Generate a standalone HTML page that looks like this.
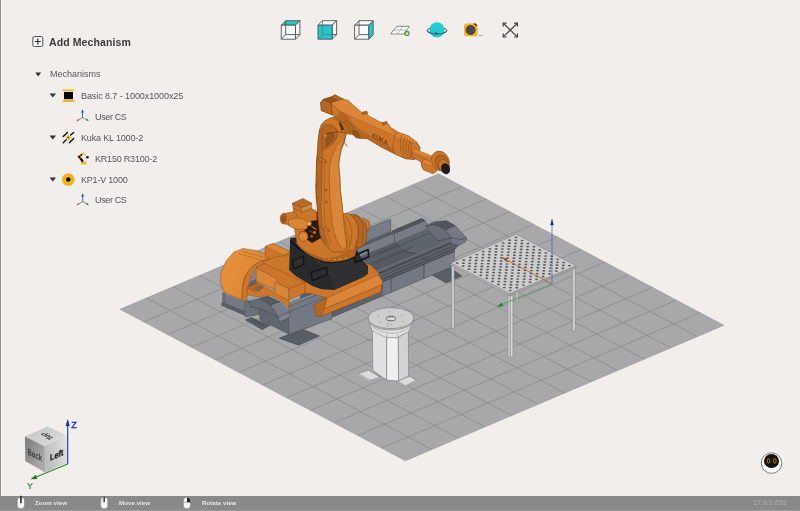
<!DOCTYPE html>
<html><head><meta charset="utf-8"><title>Mechanisms</title>
<style>
html,body{margin:0;padding:0}
body{width:800px;height:511px;overflow:hidden;background:#f1eeec;font-family:"Liberation Sans",sans-serif;position:relative;color:#4a4a4a}
#edge{position:absolute;left:0;top:0;width:1.2px;height:496px;background:#8c8c8c;border-right:1px solid #f8f7f7}
#scene{position:absolute;left:0;top:0;will-change:transform}
#bar{position:absolute;left:0;top:496px;width:800px;height:14px;background:#898989;border-bottom:1px solid #9c9c9c}
.t,#add,.bt{will-change:transform}
.t{position:absolute;white-space:nowrap;line-height:12px;font-size:9px;color:#585858}
#add{position:absolute;left:49.2px;top:35.6px;font-size:10.5px;font-weight:bold;letter-spacing:0.1px;color:#3c3c3c;line-height:13px;white-space:nowrap}
.bt{position:absolute;top:498.3px;font-size:6.2px;font-weight:bold;line-height:10px;color:#e6e6e6;white-space:nowrap}
</style></head><body>
<svg id="scene" width="800" height="511" viewBox="0 0 800 511">
<polygon points="120.0,309.3 405.4,460.8 723.9,325.3 438.6,173.8" fill="#a8a8aa"/>
<path d="M143.8 321.9L462.4 186.4M146.6 298.0L431.9 449.5M167.6 334.6L486.2 199.1M173.1 286.7L458.5 438.2M191.3 347.2L509.9 211.7M199.7 275.4L485.0 426.9M215.1 359.8L533.7 224.3M226.2 264.1L511.6 415.6M238.9 372.4L557.5 236.9M252.8 252.8L538.1 404.3M262.7 385.1L581.2 249.6M279.3 241.6L564.6 393.1M286.5 397.7L605.0 262.2M305.9 230.3L591.2 381.8M310.3 410.3L628.8 274.8M332.4 219.0L617.7 370.5M334.0 422.9L652.6 287.4M359.0 207.7L644.3 359.2M357.8 435.6L676.4 300.1M385.5 196.4L670.8 347.9M381.6 448.2L700.1 312.7M412.1 185.1L697.4 336.6" stroke="#8b8b8d" stroke-width="0.8" fill="none"/>
<defs><radialGradient id="fl" gradientUnits="userSpaceOnUse" cx="395" cy="238" r="330" gradientTransform="translate(395 238) scale(1 0.62) translate(-395 -238)"><stop offset="0" stop-color="#fff" stop-opacity="0.30"/><stop offset="0.35" stop-color="#fff" stop-opacity="0.17"/><stop offset="0.8" stop-color="#fff" stop-opacity="0.03"/><stop offset="1" stop-color="#fff" stop-opacity="0"/></radialGradient></defs>
<polygon points="120.0,309.3 405.4,460.8 723.9,325.3 438.6,173.8" fill="none" stroke="#9b9b9d" stroke-width="0.6"/>
<g id="track">
<polygon points="245.5,320.0 262.3,329.7 270.0,325.2 251.1,317.5" fill="#595e66" stroke="#303338" stroke-width="0.4" stroke-linejoin="round"/>
<polygon points="250.0,320.3 262.0,326.8 265.5,325.0 253.5,318.6" fill="#4f545b"/>
<polygon points="279.0,338.2 298.5,345.2 319.5,336.0 302.0,329.0" fill="#595e66" stroke="#303338" stroke-width="0.4" stroke-linejoin="round"/>
<polygon points="431.0,274.5 446.0,283.0 462.0,276.0 450.0,268.0" fill="#595e66" stroke="#303338" stroke-width="0.4" stroke-linejoin="round"/>
<polygon points="348.0,236.8 390.0,219.0 390.7,219.4 390.7,231.4 348.0,249.4" fill="#777c86" stroke="#303338" stroke-width="0.4" stroke-linejoin="round"/>
<polygon points="391.7,230.9 395.3,233.8 395.3,243.0 391.7,240.5" fill="#5b6068"/>
<polygon points="391.7,230.9 421.7,218.3 425.8,220.9 395.3,233.8" fill="#4f545b" stroke="#303338" stroke-width="0.3" stroke-linejoin="round"/>
<polygon points="395.3,233.8 425.8,220.9 428.0,224.0 428.0,230.5 395.3,243.0" fill="#777c86"/>
<polygon points="348.0,249.4 390.7,231.4 394.0,234.0 348.0,253.4" fill="#575c64"/>
<polygon points="348.0,253.4 394.0,234.0 394.0,242.6 348.0,262.0" fill="#777c86"/>
<polygon points="300.0,282.5 348.0,262.0 394.0,242.6 425.8,229.4 430.0,232.6 449.4,235.8 467.0,238.5 465.8,241.6 458.8,245.6 455.0,249.0 455.0,252.0 300.0,316.6" fill="#5b6068"/>
<polygon points="300.0,316.6 455.0,251.2 455.0,265.4 300.0,330.8" fill="#737882"/>
<polygon points="424.0,264.3 455.0,251.2 455.0,265.4 424.0,278.5" fill="#797e88"/>
<polygon points="300.0,316.6 383.0,281.6 383.0,295.8 300.0,330.8" fill="#5c616a"/>
<polyline points="424.0,264.3 424.0,278.5" fill="none" stroke="#303338" stroke-width="0.6"/>
<polyline points="300.0,330.8 455.0,265.4" fill="none" stroke="#4a4e55" stroke-width="0.5"/>
<polyline points="391.0,278.2 391.0,292.4" fill="none" stroke="#303338" stroke-width="0.5"/>
<polyline points="330.0,303.9 455.0,251.2" fill="none" stroke="#303338" stroke-width="0.7"/>
<polyline points="330.0,301.2 456.5,247.9" fill="none" stroke="#303338" stroke-width="0.6"/>
<polygon points="348.0,262.0 394.0,242.6 395.3,242.6 398.2,245.8 404.0,250.3 408.8,252.6 417.0,253.2 340.0,285.7" fill="#555a62"/>
<polygon points="395.3,242.6 425.8,229.6 449.4,235.8 453.0,238.0 453.0,238.0 417.0,253.2 408.8,252.6 404.0,250.3 398.2,245.8" fill="#5e646c"/>
<polyline points="395.3,242.6 398.2,245.8 404.0,250.3 408.8,252.6 417.0,253.2" fill="none" stroke="#303338" stroke-width="0.5"/>
<polyline points="340.0,269.7 399.0,244.8" fill="none" stroke="#303338" stroke-width="0.4"/>
<polyline points="340.0,273.7 404.0,246.7" fill="none" stroke="#666b74" stroke-width="0.9"/>
<polyline points="340.0,277.7 413.0,246.9" fill="none" stroke="#303338" stroke-width="0.4"/>
<polyline points="399.0,245.8 449.0,224.7" fill="none" stroke="#303338" stroke-width="0.35"/>
<polyline points="340.0,286.8 454.0,238.7" fill="none" stroke="#6a6f78" stroke-width="1.3"/>
<polyline points="340.0,289.9 455.0,241.4" fill="none" stroke="#303338" stroke-width="0.8"/>
<polyline points="340.0,293.8 456.0,244.9" fill="none" stroke="#303338" stroke-width="0.4"/>
<polyline points="421.5,256.8 427.6,260.4" fill="none" stroke="#303338" stroke-width="0.5"/>
<polygon points="425.8,225.9 434.5,221.8 440.8,221.2 435.5,225.0" fill="#585d65" stroke="#303338" stroke-width="0.3" stroke-linejoin="round"/>
<polygon points="435.5,225.0 440.8,221.2 446.4,220.6 455.2,225.6 445.8,230.0" fill="#50555d" stroke="#303338" stroke-width="0.35" stroke-linejoin="round"/>
<polygon points="425.8,225.9 435.5,225.0 445.8,230.0 451.4,237.8 438.0,240.8 430.0,232.6" fill="#676c76" stroke="#303338" stroke-width="0.35" stroke-linejoin="round"/>
<polygon points="445.8,230.0 455.2,225.6 466.5,237.8 460.2,239.6 451.4,237.8" fill="#747985" stroke="#303338" stroke-width="0.35" stroke-linejoin="round"/>
<polygon points="451.4,237.8 460.2,239.6 466.5,237.8 465.8,241.6 458.8,245.6 450.0,242.5" fill="#727783" stroke="#303338" stroke-width="0.3" stroke-linejoin="round"/>
<polygon points="224.7,293.6 244.5,301.5 244.5,313.0 224.7,304.0" fill="#747984"/>
<polygon points="221.6,303.0 224.7,303.4 244.5,311.6 244.5,315.2 221.6,305.4" fill="#5b6068" stroke="#303338" stroke-width="0.3" stroke-linejoin="round"/>
<polygon points="222.6,292.6 224.7,293.6 224.7,303.4 222.6,302.8" fill="#686d77" stroke="#303338" stroke-width="0.3" stroke-linejoin="round"/>
<polygon points="244.5,299.5 249.1,301.2 250.6,306.8 259.8,308.4 259.8,314.5 245.5,317.0 244.5,315.2" fill="#6b707a" stroke="#303338" stroke-width="0.35" stroke-linejoin="round"/>
<polygon points="259.8,308.4 278.6,317.0 279.1,322.0 289.8,317.5 289.8,334.5 259.8,320.0" fill="#60656f" stroke="#303338" stroke-width="0.3" stroke-linejoin="round"/>
<polygon points="288.7,306.0 332.0,288.7 332.0,318.8 288.7,334.5" fill="#737882" stroke="#303338" stroke-width="0.3" stroke-linejoin="round"/>
<polygon points="288.7,303.0 332.0,285.7 332.0,288.7 288.7,306.0" fill="#7f848e" stroke="#303338" stroke-width="0.3" stroke-linejoin="round"/>
<polyline points="288.7,312.0 332.0,294.7" fill="none" stroke="#303338" stroke-width="0.3"/>
<polygon points="249.1,301.2 259.8,298.2 270.5,305.3 278.6,317.0 259.8,308.4 250.6,306.8" fill="#666b75" stroke="#303338" stroke-width="0.35" stroke-linejoin="round"/>
<polygon points="259.8,298.2 267.9,296.1 280.1,301.7 270.5,305.3" fill="#545961" stroke="#303338" stroke-width="0.35" stroke-linejoin="round"/>
<polygon points="270.5,305.3 280.1,301.7 289.8,311.9 278.6,317.0" fill="#787d89" stroke="#303338" stroke-width="0.35" stroke-linejoin="round"/>
<polygon points="278.6,317.0 289.8,311.9 289.8,317.5 279.1,322.0" fill="#7e838d" stroke="#303338" stroke-width="0.35" stroke-linejoin="round"/>
</g>
<g id="robot" stroke-linejoin="round">
<defs><linearGradient id="ga" x1="0" y1="0" x2="1" y2="0.4"><stop offset="0" stop-color="#e69240"/><stop offset="0.55" stop-color="#e08a36"/><stop offset="1" stop-color="#d27e2e"/></linearGradient></defs>
<polygon points="224.4,292.5 220.4,282.5 221.0,272.0 226.4,260.4 234.0,252.0 243.0,248.4 256.3,250.6 268.0,255.0 285.0,263.8 277.5,260.6 267.5,259.4 262.0,261.0 256.3,263.8 251.5,267.5 247.5,272.5 244.0,279.0 242.5,287.5 241.9,300.0" fill="url(#ga)" stroke="#6e3c0e" stroke-width="0.4" stroke-linejoin="round"/>
<polyline points="242.0,251.5 280.0,261.5" fill="none" stroke="#6e3c0e" stroke-width="0.3"/>
<polyline points="238.5,253.5 262.0,260.6" fill="none" stroke="#6e3c0e" stroke-width="0.3"/>
<polygon points="241.9,300.0 242.5,287.5 244.0,279.0 247.5,272.5 251.5,267.5 256.3,263.8 262.0,261.0 267.5,259.4 277.5,260.6 285.0,263.8 267.5,261.9 256.3,267.5 256.3,268.1 252.5,274.0 249.5,281.0 247.6,290.0 246.6,301.8" fill="#cc762b" stroke="#6e3c0e" stroke-width="0.4" stroke-linejoin="round"/>
<polygon points="256.3,268.1 252.5,274.0 249.5,281.0 247.6,288.0 256.3,284.0" fill="#7f858e"/>
<polygon points="247.6,288.0 256.3,284.0 256.3,279.0 249.9,281.5" fill="#5f646c"/>
<polygon points="247.2,287.8 256.3,283.4 256.3,281.3 288.8,300.0 289.5,304.0 288.0,308.0 280.0,300.0 270.0,295.5 259.0,297.0 247.0,295.0" fill="#cc762b" stroke="#6e3c0e" stroke-width="0.3" stroke-linejoin="round"/>
<polygon points="247.2,287.8 256.3,283.4 264.0,287.5 255.5,291.8" fill="#b56622" stroke="#6e3c0e" stroke-width="0.3" stroke-linejoin="round"/>
<polygon points="255.0,288.5 262.0,286.0 260.5,288.5 259.4,291.0" fill="#70757e" stroke="#303338" stroke-width="0.3" stroke-linejoin="round"/>
<polygon points="256.3,267.5 267.5,261.9 305.0,282.5 288.8,288.8 274.8,281.9 277.1,279.0" fill="#cc762b" stroke="#6e3c0e" stroke-width="0.3" stroke-linejoin="round"/>
<polygon points="256.3,268.1 277.1,279.0 277.1,290.0 256.3,281.3" fill="#da8537" stroke="#6e3c0e" stroke-width="0.3" stroke-linejoin="round"/>
<polygon points="274.8,281.9 288.8,288.8 288.8,300.0 274.8,293.8" fill="#da8537" stroke="#6e3c0e" stroke-width="0.3" stroke-linejoin="round"/>
<polygon points="288.8,288.8 305.0,282.5 305.0,293.1 288.8,300.0" fill="#cc762b" stroke="#6e3c0e" stroke-width="0.3" stroke-linejoin="round"/>
<polygon points="265.0,246.5 273.0,243.5 291.0,252.0 291.0,262.0 283.0,265.0 265.0,256.0" fill="#cc762b" stroke="#6e3c0e" stroke-width="0.3" stroke-linejoin="round"/>
<polygon points="265.0,246.5 273.0,243.5 291.0,252.0 283.0,255.0" fill="#da8537" stroke="#6e3c0e" stroke-width="0.3" stroke-linejoin="round"/>
<polygon points="262.0,262.5 276.0,256.5 300.0,255.0 370.0,264.4 378.1,272.5 382.5,281.3 380.6,291.9 320.6,316.3 316.9,316.3 313.8,305.0 326.9,298.1 312.5,293.8 305.0,293.1 305.0,282.5" fill="#cc762b" stroke="#6e3c0e" stroke-width="0.3" stroke-linejoin="round"/>
<polygon points="326.9,298.1 378.1,275.0 382.5,281.3 381.8,285.0 324.0,309.0" fill="#da8537" stroke="#6e3c0e" stroke-width="0.3" stroke-linejoin="round"/>
<polygon points="324.0,309.0 381.8,285.0 380.6,291.9 320.6,316.3" fill="#cc762b" stroke="#6e3c0e" stroke-width="0.3" stroke-linejoin="round"/>
<polygon points="313.8,305.0 326.9,298.1 324.0,309.0 320.6,316.3 316.9,316.3" fill="#b56622" stroke="#6e3c0e" stroke-width="0.3" stroke-linejoin="round"/>
<path d="M290.2 238L289.1 270L295.4 275.7L312.4 286L321.5 289.3L334 290L343 286L363.5 276.9L368 273.5L368 266L363.5 262L357 250L330 244L300 237Z" fill="#29292b"/>
<path d="M312.4 257.6L323.7 261.5L340.8 262.1L352.1 258.7L363.5 264.4L368 269L368 273.5L363.5 276.9L343 286L334 290L330 275Z" fill="#303032"/>
<path d="M290.2 240.5Q300 252 323.7 261.5Q340.8 264 355 256.3" fill="none" stroke="#0f0f0f" stroke-width="1.4"/>
<polygon points="311.2,272.3 326.6,267.2 327.1,274.6 312.4,280.8" fill="#2e2e30" stroke="#151515" stroke-width="1.5" stroke-linejoin="round"/>
<polygon points="292.5,260.4 303.3,256.4 303.9,264.4 293.6,268.9" fill="#2e2e30" stroke="#151515" stroke-width="1.4" stroke-linejoin="round"/>
<polygon points="354.3,255.6 368.2,249.6 368.7,256.8 355.2,262.7" fill="none" stroke="#151515" stroke-width="1.6" stroke-linejoin="round"/>
<path d="M296 243Q305 256 325 261.5Q342 263.5 355 256L357 246L330 240L300 236Z" fill="#b56622" stroke="#6e3c0e" stroke-width="0.3"/>
<rect x="322.0" y="256.6" width="3.4" height="2.6" fill="#da8537" stroke="#6e3c0e" stroke-width="0.35"/>
<rect x="327.5" y="257.8" width="3.4" height="2.6" fill="#da8537" stroke="#6e3c0e" stroke-width="0.35"/>
<rect x="333.0" y="258.2" width="3.4" height="2.6" fill="#da8537" stroke="#6e3c0e" stroke-width="0.35"/>
<rect x="338.5" y="257.8" width="3.4" height="2.6" fill="#da8537" stroke="#6e3c0e" stroke-width="0.35"/>
<rect x="344.0" y="256.4" width="3.4" height="2.6" fill="#da8537" stroke="#6e3c0e" stroke-width="0.35"/>
<path d="M296 241Q304 252 322 258.5" fill="none" stroke="#6e3c0e" stroke-width="0.5"/>
<path d="M343 213.8Q347 212.2 350.9 214.8Q356 218.5 358.2 226Q359.6 236 355.8 246.1Q353.5 250 350.9 251L343 250Z" fill="#cc762b" stroke="#6e3c0e" stroke-width="0.45"/>
<path d="M350.9 214Q356 213.6 360.7 217.7Q365.5 222.5 366.5 229.5Q367.2 237 365.6 242.2Q363 246.5 358.7 248L355.8 246.1Q359.6 236 358.2 226Q356 218.5 350.9 214.8Z" fill="#b56622" stroke="#6e3c0e" stroke-width="0.45"/>
<path d="M355 214.6Q361 218 363 226Q364 236 361.5 245.5" fill="none" stroke="#6e3c0e" stroke-width="0.4"/>
<path d="M362.6 217.7L368.5 220.7Q370.4 223.5 370 226.5L367.5 231.4Q366.6 224 362.6 217.7Z" fill="#cc762b" stroke="#6e3c0e" stroke-width="0.4"/>
<path d="M345.5 216Q351 222 352 232Q352 242 348.5 249" fill="none" stroke="#6e3c0e" stroke-width="0.4"/>
<path d="M293 222L316 212L343 214L350 246Q345 258 325 259Q305 254 297 243Z" fill="#cc762b" stroke="#6e3c0e" stroke-width="0.3"/>
<path d="M305 215L318 212L321 238L312 243L304.5 238Z" fill="#2b1a0b"/>
<path d="M293.2 208L301.6 212.2L311.6 208.6L316.5 211L317 220L309 221.5L300 226.5L294 224Z" fill="#cc762b" stroke="#6e3c0e" stroke-width="0.4"/>
<path d="M283.3 213.6L293.7 211.8L297 214L296.5 225.8L285 224.2Z" fill="#cc762b" stroke="#6e3c0e" stroke-width="0.4"/>
<ellipse cx="283.4" cy="218.8" rx="3.2" ry="5.2" fill="#b56622" stroke="#6e3c0e" stroke-width="0.45"/>
<ellipse cx="283.3" cy="218.9" rx="1.7" ry="3" fill="#96541a" stroke="#6e3c0e" stroke-width="0.3"/>
<path d="M288.5 219.5Q295 216.5 303.5 219L308 222.5L307 229L298 229.5Q291 227.5 288.5 225.5Z" fill="#da8537" stroke="#6e3c0e" stroke-width="0.4"/>
<circle cx="309" cy="223.6" r="2.5" fill="#eaa050" stroke="#6e3c0e" stroke-width="0.4"/>
<ellipse cx="303.4" cy="236.4" rx="4.6" ry="5" fill="#da8537" stroke="#6e3c0e" stroke-width="0.45"/>
<path d="M299.5 232.5Q303 230.5 307 232.5" fill="none" stroke="#6e3c0e" stroke-width="0.4"/>
<circle cx="314.5" cy="232.5" r="1.4" fill="#cc762b" stroke="#6e3c0e" stroke-width="0.3"/>
<path d="M311.5 226.5L316.5 229.5" fill="none" stroke="#b56622" stroke-width="1.3"/>
<circle cx="311.6" cy="236.2" r="1.2" fill="#b56622"/>
<path d="M309 230.5L313.5 233" fill="none" stroke="#8a4c16" stroke-width="0.9"/>
<polygon points="292.1,203.3 301.4,207.7 301.6,212.2 293.2,208.0" fill="#c5752d" stroke="#6e3c0e" stroke-width="0.4" stroke-linejoin="round"/>
<polygon points="301.4,207.7 311.8,203.3 311.6,208.6 301.6,212.2" fill="#d8873a" stroke="#6e3c0e" stroke-width="0.4" stroke-linejoin="round"/>
<polygon points="292.1,203.3 303.0,198.4 311.8,203.3 301.4,207.7" fill="#b86a28" stroke="#6e3c0e" stroke-width="0.45" stroke-linejoin="round"/>
<polygon points="324.5,244.0 320.0,234.4 318.1,219.7 317.1,205.0 316.4,200.0 315.9,189.0 316.4,170.0 316.8,159.0 317.7,149.2 318.2,139.4 319.7,129.6 321.0,125.0 324.6,120.8 330.5,117.8 337.3,116.4 343.0,118.5 346.5,123.0 347.5,128.0 346.2,133.5 344.2,142.3 341.3,149.2 339.3,159.0 338.6,165.0 339.7,175.5 340.3,190.0 342.0,205.0 343.0,214.8 344.5,229.5 346.0,239.2 347.0,247.0 343.0,252.0 332.0,252.0" fill="#cc762b" stroke="#6e3c0e" stroke-width="0.5" stroke-linejoin="round"/>
<polygon points="319.7,129.6 318.2,139.4 317.7,149.2 316.8,159.0 316.4,170.0 315.9,189.0 316.4,200.0 317.1,205.0 318.1,219.7 320.0,234.4 324.5,244.0 330.0,248.0 327.4,242.0 322.0,224.6 321.0,205.0 321.8,189.0 322.0,160.0 323.2,150.0 322.5,140.0 322.6,128.0" fill="#b56622"/>
<polygon points="336.0,148.0 331.5,157.0 329.3,168.7 329.5,189.0 330.3,205.0 332.3,224.6 336.2,239.2 341.0,248.0 347.0,247.0 346.0,239.2 344.5,229.5 343.0,214.8 342.0,205.0 340.3,190.0 339.7,175.5 338.6,165.0 339.3,159.0 341.3,149.2 341.5,141.0" fill="#da8537"/>
<polyline points="339.3,159.0 338.6,165.0 339.7,175.5 340.3,190.0 342.0,205.0 343.0,214.8 344.5,229.5 346.0,239.2" fill="none" stroke="#e2914a" stroke-width="0.7"/>
<polyline points="323.2,150.0 322.0,160.0 321.8,189.0 321.0,205.0 322.0,224.6 327.4,242.0" fill="none" stroke="#6e3c0e" stroke-width="0.35"/>
<polyline points="336.0,148.0 331.5,157.0 329.3,168.7 329.5,189.0 330.3,205.0 332.3,224.6 336.2,239.2 341.0,248.0" fill="none" stroke="#6e3c0e" stroke-width="0.35"/>
<polyline points="324.6,160.0 324.5,189.0 324.0,205.0 325.0,224.0 330.5,243.0" fill="none" stroke="#6e3c0e" stroke-width="0.3"/>
<polyline points="319.7,129.6 318.2,139.4 317.7,149.2 316.8,159.0 316.4,170.0 315.9,189.0 316.4,200.0 317.1,205.0 318.1,219.7 320.0,234.4 324.5,244.0" fill="none" stroke="#6e3c0e" stroke-width="0.5"/>
<polyline points="346.2,133.5 344.2,142.3 341.3,149.2 339.3,159.0 338.6,165.0 339.7,175.5 340.3,190.0 342.0,205.0 343.0,214.8 344.5,229.5 346.0,239.2 347.0,247.0" fill="none" stroke="#6e3c0e" stroke-width="0.5"/>
<path d="M321.4 226.6L328.8 230.4" fill="none" stroke="#6e3c0e" stroke-width="2.6" stroke-linecap="round"/>
<path d="M321.4 226.6L328.8 230.4" fill="none" stroke="#cc762b" stroke-width="1.7" stroke-linecap="round"/>
<path d="M322.6 126.7Q324.5 124.5 327.5 124.7Q331 124.6 333.4 126.2Q337 128.5 337.3 132.5Q337.5 137.5 334.4 141.4Q332 145 328.5 147.2Q325.5 148.8 323.1 149.2Q321.8 144 322.1 139.4Q322 132 322.6 126.7Z" fill="#b56622" stroke="#6e3c0e" stroke-width="0.45"/>
<path d="M326.5 133.5Q330 131.8 334 132.6Q335 137.5 331.5 141.8Q329 145 326 146.5Q325.4 139 326.5 133.5Z" fill="#96541a" stroke="#6e3c0e" stroke-width="0.35"/>
<circle cx="325.6" cy="135.8" r="0.9" fill="#f0b060"/>
<path d="M336 117Q341.5 117.5 344.5 121.5Q347 126 345.6 132" fill="none" stroke="#6e3c0e" stroke-width="0.45"/>
<path d="M333.5 118.6Q339.5 119.5 342 124Q343.6 128.5 342.2 133" fill="none" stroke="#6e3c0e" stroke-width="0.45"/>
<path d="M338.5 122L343.5 123.5L345 128.5L341.5 131Z" fill="#5a3210"/>
<polygon points="318.6,157.4 326.4,160.6 326.0,163.0 318.4,160.0" fill="#cc762b" stroke="#6e3c0e" stroke-width="0.5" stroke-linejoin="round"/>
<rect x="315.8" y="184.1" width="1.6" height="1.8" fill="#b56622" stroke="#6e3c0e" stroke-width="0.3"/>
<rect x="316.1" y="197.1" width="1.6" height="1.8" fill="#b56622" stroke="#6e3c0e" stroke-width="0.3"/>
<rect x="325.2" y="189.1" width="1.6" height="1.8" fill="#b56622" stroke="#6e3c0e" stroke-width="0.3"/>
<rect x="325.6" y="201.1" width="1.6" height="1.8" fill="#b56622" stroke="#6e3c0e" stroke-width="0.3"/>
<path d="M328.5 133.5Q336 130.5 344 132.5Q350 134.5 353.5 131.5" fill="none" stroke="#6e3c0e" stroke-width="0.7"/>
<path d="M345 143L347 146.5" fill="none" stroke="#6e3c0e" stroke-width="0.7"/>
<polygon points="320.6,102.5 323.1,99.4 331.3,96.9 335.0,94.8 340.0,98.4 348.2,100.5 355.0,106.6 362.0,112.8 364.5,112.4 367.4,113.5 368.0,115.6 381.0,122.4 384.5,122.8 389.3,125.0 390.0,127.0 399.0,132.7 408.5,136.0 416.3,141.9 420.0,147.5 418.5,157.5 414.0,159.4 405.8,158.7 394.8,153.9 381.0,147.0 367.4,138.8 361.0,138.4 356.5,137.8 352.5,134.2 347.0,134.0 344.5,129.0 340.0,121.0 332.5,115.0 321.3,110.6" fill="#cc762b" stroke="#6e3c0e" stroke-width="0.5" stroke-linejoin="round"/>
<polygon points="335.0,94.8 340.0,98.4 348.2,100.5 355.0,106.6 362.0,112.8 364.5,112.4 367.4,113.5 368.0,115.6 381.0,122.4 384.5,122.8 389.3,125.0 390.0,127.0 394.8,136.0 367.4,123.8 348.2,115.5 340.0,111.4 331.0,103.2" fill="#da8537"/>
<polyline points="331.0,103.2 340.0,111.4 348.2,115.5 367.4,123.8 394.8,136.0" fill="none" stroke="#6e3c0e" stroke-width="0.4"/>
<polygon points="340.0,111.4 348.2,115.5 358.0,120.5 358.0,128.0 367.4,133.5 381.0,141.5 394.8,148.8 394.8,153.9 381.0,147.0 367.4,138.8 361.0,138.4 356.5,137.8 352.5,134.2 347.0,134.0 344.5,129.0 340.0,121.0 336.0,117.5" fill="#b56622"/>
<polygon points="348.2,115.5 367.4,123.8 394.8,136.0 394.8,148.8 381.0,141.5 367.4,133.5 358.0,128.0 352.0,122.0" fill="#cc762b"/>
<path d="M340 121Q346 122 349 127Q351 131 350 134" fill="none" stroke="#6e3c0e" stroke-width="0.45"/>
<path d="M343.5 119.5Q350 121.5 353 127Q354.5 131 353.5 135" fill="none" stroke="#6e3c0e" stroke-width="0.45"/>
<polygon points="352.5,130.0 358.0,131.5 360.5,137.8 356.5,137.8 352.5,134.2" fill="#96541a" stroke="#6e3c0e" stroke-width="0.35" stroke-linejoin="round"/>
<polygon points="320.6,102.5 323.1,99.4 331.0,103.2 332.0,114.8 321.3,110.6" fill="#b56622" stroke="#6e3c0e" stroke-width="0.4" stroke-linejoin="round"/>
<polygon points="323.1,99.4 331.3,96.9 338.0,100.2 331.0,103.2" fill="#96541a" stroke="#6e3c0e" stroke-width="0.4" stroke-linejoin="round"/>
<polygon points="331.3,96.9 335.0,94.8 343.5,99.0 338.0,100.2" fill="#b56622" stroke="#6e3c0e" stroke-width="0.4" stroke-linejoin="round"/>
<polyline points="331.0,103.2 332.0,114.8" fill="none" stroke="#6e3c0e" stroke-width="0.4"/>
<polygon points="361.9,112.2 366.9,111.0 367.5,113.4 362.5,114.6" fill="#b56622" stroke="#6e3c0e" stroke-width="0.4" stroke-linejoin="round"/>
<polygon points="381.9,122.6 386.9,121.4 387.5,123.8 382.5,125.0" fill="#b56622" stroke="#6e3c0e" stroke-width="0.4" stroke-linejoin="round"/>
<polygon points="394.8,136.0 399.0,132.7 408.5,136.0 416.3,141.9 420.0,147.5 418.5,157.5 414.0,159.4 405.8,158.7 394.8,153.9 392.6,147.0" fill="#cc762b" stroke="#6e3c0e" stroke-width="0.4" stroke-linejoin="round"/>
<polygon points="394.8,136.0 399.0,132.7 408.5,136.0 416.3,141.9 413.0,142.5 405.0,139.5" fill="#da8537"/>
<path d="M402.0 134.6Q397.5 147.0 404.0 158.0" fill="none" stroke="#6e3c0e" stroke-width="0.45"/>
<path d="M405.0 136.5Q400.5 148.5 407.0 158.2" fill="none" stroke="#6e3c0e" stroke-width="0.45"/>
<path d="M407.6 138.1Q403.1 149.8 409.6 158.3" fill="none" stroke="#6e3c0e" stroke-width="0.45"/>
<path d="M410.2 139.7Q405.7 151.1 412.2 158.4" fill="none" stroke="#6e3c0e" stroke-width="0.45"/>
<path d="M412.6 141.2Q408.1 152.3 414.6 158.5" fill="none" stroke="#6e3c0e" stroke-width="0.45"/>
<text transform="matrix(0.78,0.39,0,1,372.2,137.6)" font-family="Liberation Sans, sans-serif" font-size="7" font-weight="bold" fill="#6b3a0f">KUKA</text>
<polygon points="413.8,148.8 432.5,156.3 430.0,163.0 422.5,163.0 411.3,156.3" fill="#cc762b" stroke="#6e3c0e" stroke-width="0.4" stroke-linejoin="round"/>
<polygon points="413.8,148.8 432.5,156.3 431.6,158.6 413.0,151.6" fill="#da8537"/>
<polyline points="412.5,153.6 428.0,160.4" fill="none" stroke="#6e3c0e" stroke-width="0.35"/>
<path d="M421.3 162L424 159.5L436 163.5L437 171L433 173.8L423.5 170Q420.5 166 421.3 162Z" fill="#cc762b" stroke="#6e3c0e" stroke-width="0.45"/>
<path d="M424 159.5L436 163.5L435.2 166.2L423 162.2Z" fill="#da8537"/>
<ellipse cx="440.3" cy="161" rx="8.6" ry="10.2" transform="rotate(-28 440.3 161)" fill="#cc762b" stroke="#6e3c0e" stroke-width="0.45"/>
<ellipse cx="442" cy="163" rx="6.6" ry="8.2" transform="rotate(-28 442 163)" fill="#b56622" stroke="#6e3c0e" stroke-width="0.45"/>
<ellipse cx="444" cy="166" rx="5.2" ry="6.6" transform="rotate(-24 444 166)" fill="#cc762b" stroke="#6e3c0e" stroke-width="0.4"/>
<ellipse cx="445.6" cy="168.7" rx="4.4" ry="5.6" transform="rotate(-20 445.6 168.7)" fill="#1f1c1a"/>
</g>
<g id="positioner" stroke-linejoin="round">
<polygon points="358.7,373.3 368.5,370.3 380.2,377.2 370.4,380.4" fill="#dcdcdc" stroke="#6e6e6e" stroke-width="0.5" stroke-linejoin="round"/>
<polygon points="358.7,373.3 370.4,380.4 370.4,381.6 358.7,374.5" fill="#c4c4c4"/>
<polygon points="396.9,381.1 409.6,376.2 416.4,380.1 405.7,386.0" fill="#dcdcdc" stroke="#6e6e6e" stroke-width="0.5" stroke-linejoin="round"/>
<polygon points="396.9,381.1 405.7,386.0 416.4,380.1 416.4,381.4 405.7,387.3 396.9,382.4" fill="#c4c4c4" stroke="#6e6e6e" stroke-width="0.3" stroke-linejoin="round"/>
<polygon points="372.4,328.0 386.7,337.0 386.7,380.1 372.8,370.3" fill="#e0e0e0" stroke="#6e6e6e" stroke-width="0.5" stroke-linejoin="round"/>
<polygon points="386.7,337.0 398.3,337.4 398.5,381.0 386.7,380.1" fill="#f0f0f0" stroke="#6e6e6e" stroke-width="0.5" stroke-linejoin="round"/>
<polygon points="398.3,337.4 408.4,331.0 408.6,376.2 398.5,381.0" fill="#d2d2d2" stroke="#6e6e6e" stroke-width="0.5" stroke-linejoin="round"/>
<path d="M369.5 322L371.8 330.2L382.8 336L386.7 337.6L397.7 337.8L400.8 335.6L408.8 331.4L412.5 322Z" fill="#e2e2e2" stroke="#6e6e6e" stroke-width="0.45"/>
<path d="M372.5 327.5Q381 333 391 333.4Q402 333 409.5 327.5" fill="none" stroke="#6e6e6e" stroke-width="0.4"/>
<polyline points="386.7,334.0 386.7,337.6" fill="none" stroke="#6e6e6e" stroke-width="0.35"/>
<polyline points="397.7,334.0 397.7,337.8" fill="none" stroke="#6e6e6e" stroke-width="0.35"/>
<ellipse cx="391" cy="319.7" rx="22.7" ry="10.4" fill="#b9b9b9" stroke="#6e6e6e" stroke-width="0.5"/>
<ellipse cx="391" cy="318.1" rx="22.7" ry="10.4" fill="#cecece" stroke="#6e6e6e" stroke-width="0.5"/>
<ellipse cx="391" cy="318.5" rx="4.6" ry="2.3" fill="#dcdcdc" stroke="#5c5c5c" stroke-width="0.9"/>
<path d="M387.2 318.2Q391 315.8 394.8 318.2Q391 317.2 387.2 318.2Z" fill="#9a9a9a"/>
<circle cx="378.6" cy="315.6" r="0.5" fill="#777"/>
<circle cx="380.0" cy="321.8" r="0.5" fill="#777"/>
<circle cx="389.4" cy="311.8" r="0.5" fill="#777"/>
<circle cx="402.0" cy="315.0" r="0.5" fill="#777"/>
<circle cx="403.2" cy="321.4" r="0.5" fill="#777"/>
<circle cx="388.0" cy="323.6" r="0.5" fill="#777"/>
<circle cx="391.6" cy="324.8" r="0.5" fill="#777"/>
<circle cx="388.0" cy="325.6" r="0.5" fill="#777"/>
</g>
<g id="table" stroke-linejoin="round">
<polygon points="516.0,262.0 518.4,262.0 518.4,300.0 516.0,300.0" fill="#bdbdbd" stroke="#707070" stroke-width="0.3" stroke-linejoin="round"/>
<polygon points="451.6,265.0 454.2,266.2 454.2,328.6 451.6,328.6" fill="#cfcfcf" stroke="#707070" stroke-width="0.4" stroke-linejoin="round"/>
<polygon points="572.4,268.5 575.2,267.4 575.2,331.0 572.4,331.0" fill="#cfcfcf" stroke="#707070" stroke-width="0.4" stroke-linejoin="round"/>
<polygon points="451.0,263.0 509.8,293.4 509.8,295.6 451.0,265.2" fill="#b9b9b9" stroke="#707070" stroke-width="0.4" stroke-linejoin="round"/>
<polygon points="509.8,293.4 575.8,265.8 575.8,268.0 509.8,295.6" fill="#a9a9a9" stroke="#707070" stroke-width="0.4" stroke-linejoin="round"/>
<polygon points="451.0,263.0 509.8,293.4 575.8,265.8 516.5,234.3" fill="#cdcdcd" stroke="#707070" stroke-width="0.4" stroke-linejoin="round"/>
<g fill="#5e5e5e"><ellipse cx="457.2" cy="263.1" rx="1.5" ry="0.85"/><ellipse cx="463.8" cy="260.2" rx="1.5" ry="0.85"/><ellipse cx="470.3" cy="257.4" rx="1.5" ry="0.85"/><ellipse cx="476.9" cy="254.5" rx="1.5" ry="0.85"/><ellipse cx="483.4" cy="251.6" rx="1.5" ry="0.85"/><ellipse cx="490.0" cy="248.8" rx="1.5" ry="0.85"/><ellipse cx="496.5" cy="245.9" rx="1.5" ry="0.85"/><ellipse cx="503.1" cy="243.0" rx="1.5" ry="0.85"/><ellipse cx="509.6" cy="240.2" rx="1.5" ry="0.85"/><ellipse cx="516.2" cy="237.3" rx="1.5" ry="0.85"/><ellipse cx="463.1" cy="266.1" rx="1.5" ry="0.85"/><ellipse cx="469.7" cy="263.3" rx="1.5" ry="0.85"/><ellipse cx="476.2" cy="260.4" rx="1.5" ry="0.85"/><ellipse cx="482.8" cy="257.6" rx="1.5" ry="0.85"/><ellipse cx="489.3" cy="254.7" rx="1.5" ry="0.85"/><ellipse cx="495.9" cy="251.9" rx="1.5" ry="0.85"/><ellipse cx="502.4" cy="249.0" rx="1.5" ry="0.85"/><ellipse cx="509.0" cy="246.2" rx="1.5" ry="0.85"/><ellipse cx="515.6" cy="243.3" rx="1.5" ry="0.85"/><ellipse cx="522.1" cy="240.5" rx="1.5" ry="0.85"/><ellipse cx="469.0" cy="269.2" rx="1.5" ry="0.85"/><ellipse cx="475.5" cy="266.3" rx="1.5" ry="0.85"/><ellipse cx="482.1" cy="263.5" rx="1.5" ry="0.85"/><ellipse cx="488.7" cy="260.7" rx="1.5" ry="0.85"/><ellipse cx="495.2" cy="257.8" rx="1.5" ry="0.85"/><ellipse cx="501.8" cy="255.0" rx="1.5" ry="0.85"/><ellipse cx="508.4" cy="252.1" rx="1.5" ry="0.85"/><ellipse cx="514.9" cy="249.3" rx="1.5" ry="0.85"/><ellipse cx="521.5" cy="246.4" rx="1.5" ry="0.85"/><ellipse cx="528.0" cy="243.6" rx="1.5" ry="0.85"/><ellipse cx="474.9" cy="272.2" rx="1.5" ry="0.85"/><ellipse cx="481.4" cy="269.4" rx="1.5" ry="0.85"/><ellipse cx="488.0" cy="266.6" rx="1.5" ry="0.85"/><ellipse cx="494.6" cy="263.7" rx="1.5" ry="0.85"/><ellipse cx="501.1" cy="260.9" rx="1.5" ry="0.85"/><ellipse cx="507.7" cy="258.1" rx="1.5" ry="0.85"/><ellipse cx="514.3" cy="255.2" rx="1.5" ry="0.85"/><ellipse cx="520.8" cy="252.4" rx="1.5" ry="0.85"/><ellipse cx="527.4" cy="249.6" rx="1.5" ry="0.85"/><ellipse cx="534.0" cy="246.7" rx="1.5" ry="0.85"/><ellipse cx="480.7" cy="275.3" rx="1.5" ry="0.85"/><ellipse cx="487.3" cy="272.4" rx="1.5" ry="0.85"/><ellipse cx="493.9" cy="269.6" rx="1.5" ry="0.85"/><ellipse cx="500.5" cy="266.8" rx="1.5" ry="0.85"/><ellipse cx="507.0" cy="264.0" rx="1.5" ry="0.85"/><ellipse cx="513.6" cy="261.2" rx="1.5" ry="0.85"/><ellipse cx="520.2" cy="258.3" rx="1.5" ry="0.85"/><ellipse cx="526.8" cy="255.5" rx="1.5" ry="0.85"/><ellipse cx="533.3" cy="252.7" rx="1.5" ry="0.85"/><ellipse cx="539.9" cy="249.9" rx="1.5" ry="0.85"/><ellipse cx="486.6" cy="278.3" rx="1.5" ry="0.85"/><ellipse cx="493.2" cy="275.5" rx="1.5" ry="0.85"/><ellipse cx="499.8" cy="272.7" rx="1.5" ry="0.85"/><ellipse cx="506.4" cy="269.9" rx="1.5" ry="0.85"/><ellipse cx="512.9" cy="267.1" rx="1.5" ry="0.85"/><ellipse cx="519.5" cy="264.3" rx="1.5" ry="0.85"/><ellipse cx="526.1" cy="261.5" rx="1.5" ry="0.85"/><ellipse cx="532.7" cy="258.6" rx="1.5" ry="0.85"/><ellipse cx="539.2" cy="255.8" rx="1.5" ry="0.85"/><ellipse cx="545.8" cy="253.0" rx="1.5" ry="0.85"/><ellipse cx="492.5" cy="281.4" rx="1.5" ry="0.85"/><ellipse cx="499.1" cy="278.6" rx="1.5" ry="0.85"/><ellipse cx="505.7" cy="275.8" rx="1.5" ry="0.85"/><ellipse cx="512.3" cy="273.0" rx="1.5" ry="0.85"/><ellipse cx="518.8" cy="270.2" rx="1.5" ry="0.85"/><ellipse cx="525.4" cy="267.4" rx="1.5" ry="0.85"/><ellipse cx="532.0" cy="264.6" rx="1.5" ry="0.85"/><ellipse cx="538.6" cy="261.8" rx="1.5" ry="0.85"/><ellipse cx="545.2" cy="259.0" rx="1.5" ry="0.85"/><ellipse cx="551.8" cy="256.2" rx="1.5" ry="0.85"/><ellipse cx="498.4" cy="284.4" rx="1.5" ry="0.85"/><ellipse cx="505.0" cy="281.6" rx="1.5" ry="0.85"/><ellipse cx="511.6" cy="278.8" rx="1.5" ry="0.85"/><ellipse cx="518.2" cy="276.0" rx="1.5" ry="0.85"/><ellipse cx="524.7" cy="273.3" rx="1.5" ry="0.85"/><ellipse cx="531.3" cy="270.5" rx="1.5" ry="0.85"/><ellipse cx="537.9" cy="267.7" rx="1.5" ry="0.85"/><ellipse cx="544.5" cy="264.9" rx="1.5" ry="0.85"/><ellipse cx="551.1" cy="262.1" rx="1.5" ry="0.85"/><ellipse cx="557.7" cy="259.3" rx="1.5" ry="0.85"/><ellipse cx="504.3" cy="287.5" rx="1.5" ry="0.85"/><ellipse cx="510.9" cy="284.7" rx="1.5" ry="0.85"/><ellipse cx="517.5" cy="281.9" rx="1.5" ry="0.85"/><ellipse cx="524.1" cy="279.1" rx="1.5" ry="0.85"/><ellipse cx="530.6" cy="276.3" rx="1.5" ry="0.85"/><ellipse cx="537.2" cy="273.6" rx="1.5" ry="0.85"/><ellipse cx="543.8" cy="270.8" rx="1.5" ry="0.85"/><ellipse cx="550.4" cy="268.0" rx="1.5" ry="0.85"/><ellipse cx="557.0" cy="265.2" rx="1.5" ry="0.85"/><ellipse cx="563.6" cy="262.5" rx="1.5" ry="0.85"/><ellipse cx="510.2" cy="290.5" rx="1.5" ry="0.85"/><ellipse cx="516.8" cy="287.7" rx="1.5" ry="0.85"/><ellipse cx="523.4" cy="285.0" rx="1.5" ry="0.85"/><ellipse cx="530.0" cy="282.2" rx="1.5" ry="0.85"/><ellipse cx="536.5" cy="279.4" rx="1.5" ry="0.85"/><ellipse cx="543.1" cy="276.7" rx="1.5" ry="0.85"/><ellipse cx="549.7" cy="273.9" rx="1.5" ry="0.85"/><ellipse cx="556.3" cy="271.1" rx="1.5" ry="0.85"/><ellipse cx="562.9" cy="268.4" rx="1.5" ry="0.85"/><ellipse cx="569.5" cy="265.6" rx="1.5" ry="0.85"/><ellipse cx="463.4" cy="263.2" rx="1.5" ry="0.85"/><ellipse cx="470.0" cy="260.3" rx="1.5" ry="0.85"/><ellipse cx="476.5" cy="257.5" rx="1.5" ry="0.85"/><ellipse cx="483.1" cy="254.6" rx="1.5" ry="0.85"/><ellipse cx="489.7" cy="251.7" rx="1.5" ry="0.85"/><ellipse cx="496.2" cy="248.9" rx="1.5" ry="0.85"/><ellipse cx="502.8" cy="246.0" rx="1.5" ry="0.85"/><ellipse cx="509.3" cy="243.2" rx="1.5" ry="0.85"/><ellipse cx="515.9" cy="240.3" rx="1.5" ry="0.85"/><ellipse cx="469.3" cy="266.2" rx="1.5" ry="0.85"/><ellipse cx="475.9" cy="263.4" rx="1.5" ry="0.85"/><ellipse cx="482.4" cy="260.5" rx="1.5" ry="0.85"/><ellipse cx="489.0" cy="257.7" rx="1.5" ry="0.85"/><ellipse cx="495.6" cy="254.8" rx="1.5" ry="0.85"/><ellipse cx="502.1" cy="252.0" rx="1.5" ry="0.85"/><ellipse cx="508.7" cy="249.1" rx="1.5" ry="0.85"/><ellipse cx="515.2" cy="246.3" rx="1.5" ry="0.85"/><ellipse cx="521.8" cy="243.4" rx="1.5" ry="0.85"/><ellipse cx="475.2" cy="269.3" rx="1.5" ry="0.85"/><ellipse cx="481.8" cy="266.4" rx="1.5" ry="0.85"/><ellipse cx="488.3" cy="263.6" rx="1.5" ry="0.85"/><ellipse cx="494.9" cy="260.8" rx="1.5" ry="0.85"/><ellipse cx="501.5" cy="257.9" rx="1.5" ry="0.85"/><ellipse cx="508.0" cy="255.1" rx="1.5" ry="0.85"/><ellipse cx="514.6" cy="252.3" rx="1.5" ry="0.85"/><ellipse cx="521.2" cy="249.4" rx="1.5" ry="0.85"/><ellipse cx="527.7" cy="246.6" rx="1.5" ry="0.85"/><ellipse cx="481.1" cy="272.3" rx="1.5" ry="0.85"/><ellipse cx="487.7" cy="269.5" rx="1.5" ry="0.85"/><ellipse cx="494.2" cy="266.7" rx="1.5" ry="0.85"/><ellipse cx="500.8" cy="263.9" rx="1.5" ry="0.85"/><ellipse cx="507.4" cy="261.0" rx="1.5" ry="0.85"/><ellipse cx="513.9" cy="258.2" rx="1.5" ry="0.85"/><ellipse cx="520.5" cy="255.4" rx="1.5" ry="0.85"/><ellipse cx="527.1" cy="252.6" rx="1.5" ry="0.85"/><ellipse cx="533.7" cy="249.7" rx="1.5" ry="0.85"/><ellipse cx="487.0" cy="275.4" rx="1.5" ry="0.85"/><ellipse cx="493.6" cy="272.6" rx="1.5" ry="0.85"/><ellipse cx="500.1" cy="269.8" rx="1.5" ry="0.85"/><ellipse cx="506.7" cy="266.9" rx="1.5" ry="0.85"/><ellipse cx="513.3" cy="264.1" rx="1.5" ry="0.85"/><ellipse cx="519.9" cy="261.3" rx="1.5" ry="0.85"/><ellipse cx="526.4" cy="258.5" rx="1.5" ry="0.85"/><ellipse cx="533.0" cy="255.7" rx="1.5" ry="0.85"/><ellipse cx="539.6" cy="252.9" rx="1.5" ry="0.85"/><ellipse cx="492.9" cy="278.4" rx="1.5" ry="0.85"/><ellipse cx="499.4" cy="275.6" rx="1.5" ry="0.85"/><ellipse cx="506.0" cy="272.8" rx="1.5" ry="0.85"/><ellipse cx="512.6" cy="270.0" rx="1.5" ry="0.85"/><ellipse cx="519.2" cy="267.2" rx="1.5" ry="0.85"/><ellipse cx="525.8" cy="264.4" rx="1.5" ry="0.85"/><ellipse cx="532.3" cy="261.6" rx="1.5" ry="0.85"/><ellipse cx="538.9" cy="258.8" rx="1.5" ry="0.85"/><ellipse cx="545.5" cy="256.0" rx="1.5" ry="0.85"/><ellipse cx="498.7" cy="281.5" rx="1.5" ry="0.85"/><ellipse cx="505.3" cy="278.7" rx="1.5" ry="0.85"/><ellipse cx="511.9" cy="275.9" rx="1.5" ry="0.85"/><ellipse cx="518.5" cy="273.1" rx="1.5" ry="0.85"/><ellipse cx="525.1" cy="270.3" rx="1.5" ry="0.85"/><ellipse cx="531.7" cy="267.5" rx="1.5" ry="0.85"/><ellipse cx="538.3" cy="264.7" rx="1.5" ry="0.85"/><ellipse cx="544.8" cy="261.9" rx="1.5" ry="0.85"/><ellipse cx="551.4" cy="259.1" rx="1.5" ry="0.85"/><ellipse cx="504.6" cy="284.5" rx="1.5" ry="0.85"/><ellipse cx="511.2" cy="281.8" rx="1.5" ry="0.85"/><ellipse cx="517.8" cy="279.0" rx="1.5" ry="0.85"/><ellipse cx="524.4" cy="276.2" rx="1.5" ry="0.85"/><ellipse cx="531.0" cy="273.4" rx="1.5" ry="0.85"/><ellipse cx="537.6" cy="270.6" rx="1.5" ry="0.85"/><ellipse cx="544.2" cy="267.8" rx="1.5" ry="0.85"/><ellipse cx="550.8" cy="265.1" rx="1.5" ry="0.85"/><ellipse cx="557.4" cy="262.3" rx="1.5" ry="0.85"/><ellipse cx="510.5" cy="287.6" rx="1.5" ry="0.85"/><ellipse cx="517.1" cy="284.8" rx="1.5" ry="0.85"/><ellipse cx="523.7" cy="282.0" rx="1.5" ry="0.85"/><ellipse cx="530.3" cy="279.3" rx="1.5" ry="0.85"/><ellipse cx="536.9" cy="276.5" rx="1.5" ry="0.85"/><ellipse cx="543.5" cy="273.7" rx="1.5" ry="0.85"/><ellipse cx="550.1" cy="271.0" rx="1.5" ry="0.85"/><ellipse cx="556.7" cy="268.2" rx="1.5" ry="0.85"/><ellipse cx="563.3" cy="265.4" rx="1.5" ry="0.85"/></g>
<polygon points="507.8,295.2 510.4,296.0 510.4,357.4 507.8,356.4" fill="#c6c6c6" stroke="#707070" stroke-width="0.35" stroke-linejoin="round"/>
<polygon points="510.4,296.0 512.8,295.0 512.8,356.4 510.4,357.4" fill="#d8d8d8" stroke="#707070" stroke-width="0.35" stroke-linejoin="round"/>
<polygon points="515.5,292.5 518.5,291.2 518.5,301.5 515.5,302.0" fill="#bbbbbb" stroke="#707070" stroke-width="0.3" stroke-linejoin="round"/>
<polyline points="552.0,284.0 552.0,224.0" fill="none" stroke="#3050cc" stroke-width="0.85" stroke-dasharray="1.2 0.45"/>
<polygon points="552.0,218.2 550.2,225.2 553.8,225.2" fill="#1a2fb0"/>
<polyline points="552.0,284.0 505.0,259.0" fill="none" stroke="#b86520" stroke-width="0.85"/>
<polygon points="501.8,257.3 507.6,258.4 505.8,261.6" fill="#a9560f"/>
<polyline points="552.0,284.0 501.0,304.8" fill="none" stroke="#2a9a36" stroke-width="0.85" stroke-dasharray="1.2 0.45"/>
<polygon points="496.6,306.8 503.4,306.0 501.8,302.4" fill="#1f8a2c"/>
</g>
</svg>
<div id="edge"></div>
<div id="add">Add Mechanism</div>
<div class="t" style="left:49.8px;top:68.1px">Mechanisms</div>
<div class="t" style="left:81px;top:89.7px;letter-spacing:-0.08px">Basic 8.7 - 1000x1000x25</div>
<div class="t" style="left:95px;top:110.5px;letter-spacing:-0.37px">User CS</div>
<div class="t" style="left:80.8px;top:131.7px;letter-spacing:-0.16px">Kuka KL 1000-2</div>
<div class="t" style="left:95px;top:153.4px;letter-spacing:-0.2px">KR150 R3100-2</div>
<div class="t" style="left:81px;top:173.8px;letter-spacing:-0.2px">KP1-V 1000</div>
<div class="t" style="left:95px;top:194.1px;letter-spacing:-0.37px">User CS</div>
<div id="bar"></div>
<div class="bt" style="left:35.4px">Zoom view</div>
<div class="bt" style="left:119px">Move view</div>
<div class="bt" style="left:201.6px">Rotate view</div>
<div class="bt" style="left:753.4px;top:497.8px;color:#a6a6a6;font-size:7px;letter-spacing:0.05px;font-weight:bold">17.0.0.852</div>
<svg id="ui" width="800" height="511" viewBox="0 0 800 511" style="position:absolute;left:0;top:0;will-change:transform">
<!-- add icon -->
<rect x="32.8" y="36.5" width="10" height="10" rx="1.6" fill="#f7f6f5" stroke="#555" stroke-width="1"/>
<path d="M34.8 41.5h6M37.8 38.5v6" stroke="#333" stroke-width="1.2"/>
<!-- tree arrows -->
<g fill="#333">
<polygon points="35.2,72.4 41.2,72.4 38.2,76.5"/>
<polygon points="49.6,93.4 56,93.4 52.8,97.4"/>
<polygon points="49.6,135.4 56,135.4 52.8,139.4"/>
<polygon points="49.6,177.4 56,177.4 52.8,181.4"/>
</g>
<!-- basic icon -->
<rect x="62.8" y="89.4" width="11.2" height="1.9" rx="0.6" fill="#f3b21f"/>
<rect x="62.8" y="100" width="11.2" height="1.9" rx="0.6" fill="#f3b21f"/>
<rect x="64" y="92" width="9" height="7.2" fill="#0b0706"/>
<!-- user cs icons -->
<g id="ucs1">
<path d="M82.5 117.5V111" stroke="#3355cc" stroke-width="0.9"/>
<path d="M82.5 117.5L77.5 120.4" stroke="#777" stroke-width="0.9"/>
<path d="M82.5 117.5L87.5 120.2" stroke="#777" stroke-width="0.9"/>
<polygon points="82.5,109.2 81.2,112.4 83.8,112.4" fill="#1c3fd0"/>
<polygon points="76.2,121.2 79.2,120.9 78,118.8" fill="#d9731a"/>
<polygon points="88.8,121.1 85.8,120.6 87.1,118.6" fill="#2a9a3c"/>
</g>
<g transform="translate(0.2,84.1)">
<path d="M82.5 117.5V111" stroke="#3355cc" stroke-width="0.9"/>
<path d="M82.5 117.5L77.5 120.4" stroke="#777" stroke-width="0.9"/>
<path d="M82.5 117.5L87.5 120.2" stroke="#777" stroke-width="0.9"/>
<polygon points="82.5,109.2 81.2,112.4 83.8,112.4" fill="#1c3fd0"/>
<polygon points="76.2,121.2 79.2,120.9 78,118.8" fill="#d9731a"/>
<polygon points="88.8,121.1 85.8,120.6 87.1,118.6" fill="#2a9a3c"/>
</g>
<!-- kuka kl icon -->
<g stroke="#111" stroke-width="1.4" stroke-linecap="round">
<path d="M63.2 136.5L67.4 132.5"/><path d="M70.6 135.1L73.6 132.4"/>
<path d="M63.2 142.7L66.3 139.8"/><path d="M69.4 142.7L73.6 138.5"/>
</g>
<polygon points="68.4,134.4 69.6,136.3 71.6,137.2 69.7,138.6 68.5,140.7 67.3,138.7 65.3,137.6 67.2,136.4" fill="#f2b326"/>
<circle cx="68.4" cy="137.5" r="0.8" fill="#3a2a10"/>
<!-- robot icon -->
<rect x="81" y="161.6" width="5.4" height="2.9" rx="0.8" fill="#f2b21f"/>
<path d="M82.3 160.8L79.2 156.8" stroke="#111" stroke-width="2.4" stroke-linecap="round"/>
<path d="M79.2 156.8L81.6 154.6" stroke="#111" stroke-width="1.8" stroke-linecap="round"/>
<path d="M82 154.4L83.5 153L86 155.5" stroke="#e5b440" stroke-width="1.2" fill="none"/>
<circle cx="87.4" cy="157.3" r="1.3" fill="#111"/>
<circle cx="79" cy="156.8" r="1.8" fill="none" stroke="#f0c56a" stroke-width="0.6"/>
<!-- kp1 icon -->
<circle cx="68.3" cy="179.5" r="6.3" fill="#f3b21b"/>
<circle cx="68.3" cy="179.5" r="2.3" fill="#0a0705"/>
<!-- toolbar cubes -->
<g stroke="#555" stroke-width="0.9" fill="none" stroke-linejoin="round">
 <g id="cube1">
  <polygon points="281.3,25.2 295.5,25.2 299.9,20.7 285.7,20.7" fill="#25c6c9"/>
  <polygon points="281.3,25.2 295.5,25.2 295.5,39.2 281.3,39.2" fill="#fbfafa"/>
  <polygon points="295.5,25.2 299.9,20.7 299.9,34.6 295.5,39.2" fill="#fbfafa"/>
  <path d="M285.7 20.7V34.6H299.9M285.7 34.6L281.3 39.2"/>
 </g>
 <g transform="translate(36.7,0)">
  <polygon points="281.3,25.2 295.5,25.2 299.9,20.7 285.7,20.7" fill="#fbfafa"/>
  <polygon points="295.5,25.2 299.9,20.7 299.9,34.6 295.5,39.2" fill="#fbfafa"/>
  <polygon points="281.3,25.2 295.5,25.2 295.5,39.2 281.3,39.2" fill="#25c6c9"/>
  <path d="M285.7 20.7V34.6H299.9M285.7 34.6L281.3 39.2" stroke="#3a8f92"/>
  <path d="M295.5 34.6H299.9"/>
 </g>
 <g transform="translate(73.3,0)">
  <polygon points="281.3,25.2 295.5,25.2 299.9,20.7 285.7,20.7" fill="#fbfafa"/>
  <polygon points="281.3,25.2 295.5,25.2 295.5,39.2 281.3,39.2" fill="#fbfafa"/>
  <polygon points="295.5,25.2 299.9,20.7 299.9,34.6 295.5,39.2" fill="#25c6c9"/>
  <path d="M285.7 20.7V34.6H295.5M285.7 34.6L281.3 39.2"/>
 </g>
</g>
<!-- grid icon -->
<polygon points="390.6,34 396.6,26.3 409.4,26.3 404,34" fill="#fbfbfb" stroke="#888" stroke-width="1"/>
<path d="M397.3 34L403 26.3M393.6 30.1H406.7" stroke="#aaa" stroke-width="0.8"/>
<circle cx="407" cy="33.4" r="2.1" fill="#e2d97c" stroke="#4f9a57" stroke-width="1.2"/>
<!-- globe -->
<ellipse cx="437" cy="30.6" rx="9.8" ry="3.4" fill="none" stroke="#3b5560" stroke-width="1"/>
<circle cx="437" cy="29.9" r="7.6" fill="#1fcdd0"/>
<path d="M427.2 30.6A9.8 3.4 0 0 0 446.8 30.6" stroke="#3b5560" stroke-width="1" fill="none"/>
<path d="M434.5 31.8L437.6 33.6L434.6 35.2" fill="none" stroke="#3b5560" stroke-width="1"/>
<!-- tape -->
<rect x="464" y="23.4" width="13.6" height="12.8" rx="2.6" fill="#f3b526"/>
<circle cx="470.6" cy="30" r="4.5" fill="#4b4b4b" stroke="#333" stroke-width="0.8"/>
<path d="M474.3 23.6L476.6 25.8" stroke="#222" stroke-width="1.4"/>
<path d="M478.4 35.6H482.4V34.6" stroke="#999" stroke-width="0.7" fill="none"/>
<!-- arrows -->
<g stroke="#444" stroke-width="1.2" fill="none">
<path d="M503.3 23.3L517.3 36.9M517.3 23.3L503.3 36.9"/>
<path d="M503.2 26.6V23.2H506.6M514 23.2H517.4V26.6M517.4 33.6V37H514M506.6 37H503.2V33.6"/>
</g>
<!-- eye -->
<circle cx="771.5" cy="463.1" r="10.3" fill="#fdfdfd" stroke="#7c7c7c" stroke-width="1"/>
<ellipse cx="771.5" cy="461" rx="7.5" ry="7.1" fill="#151210"/>
<ellipse cx="768.6" cy="460.9" rx="1.3" ry="2.4" fill="none" stroke="#c8861e" stroke-width="0.8"/>
<ellipse cx="774.8" cy="460.9" rx="1.3" ry="2.4" fill="none" stroke="#c8861e" stroke-width="0.8"/>
<!-- mouse icons -->
<g id="m1">
<rect x="17.3" y="497.2" width="7.2" height="11.6" rx="3.4" fill="#f6f6f6" stroke="#777" stroke-width="0.5"/>
<rect x="20.2" y="495.8" width="1.5" height="7.4" fill="#1a1a1a"/>
</g>
<g>
<rect x="100.6" y="497.2" width="7.2" height="11.6" rx="3.4" fill="#f6f6f6" stroke="#777" stroke-width="0.5"/>
<path d="M100.9 502.2V500.6A3.3 3.3 0 0 1 104.2 497.4V502.2Z" fill="#ddd"/>
<rect x="103.6" y="496.6" width="1.2" height="5.6" fill="#222"/>
</g>
<g>
<rect x="183.4" y="497.2" width="7.2" height="11.6" rx="3.4" fill="#f6f6f6" stroke="#777" stroke-width="0.5"/>
<path d="M190.3 502.2V500.6A3.3 3.3 0 0 0 187 497.4V502.2Z" fill="#222"/>
<path d="M183.7 502.2H190.3" stroke="#555" stroke-width="0.5"/>
</g>
<!-- nav cube -->
<defs>
<linearGradient id="gt" x1="0" y1="0" x2="1" y2="1"><stop offset="0" stop-color="#c4c4c4"/><stop offset="1" stop-color="#dedede"/></linearGradient>
<linearGradient id="gb" x1="0" y1="0" x2="1" y2="0.6"><stop offset="0" stop-color="#7c7c7c"/><stop offset="1" stop-color="#ababab"/></linearGradient>
<linearGradient id="gl" x1="0" y1="0.3" x2="1" y2="0"><stop offset="0" stop-color="#bdbdbd"/><stop offset="1" stop-color="#e2e2e2"/></linearGradient>
</defs>
<polygon points="24.9,436.6 47.6,426.4 65.6,435 44.7,446.3" fill="url(#gt)"/>
<polygon points="24.9,436.6 44.7,446.3 45.2,472.6 25.3,460.9" fill="url(#gb)"/>
<polygon points="44.7,446.3 65.6,435 66,463.2 45.2,472.6" fill="url(#gl)"/>
<path d="M67.7 464V424" stroke="#2a43c0" stroke-width="1.2"/>
<path d="M66.6 463.5V437" stroke="#8fa0e0" stroke-width="0.6" stroke-dasharray="1 1"/>
<polygon points="67.7,419 65.6,426 69.8,426" fill="#1a2fb0"/>
<path d="M67.7 464L35 477.4" stroke="#2c8a35" stroke-width="1.1"/>
<polygon points="30.6,479.2 37.4,478.9 35.6,474.8" fill="#1f7a2a"/>
<text x="71.3" y="428.2" font-family="Liberation Sans, sans-serif" font-size="9" fill="#1a2fb0" stroke="#1a2fb0" stroke-width="0.3">Z</text>
<text x="27" y="488.6" font-family="Liberation Sans, sans-serif" font-size="9" fill="#2c8a35" stroke="#2c8a35" stroke-width="0.2">Y</text>
<g font-family="Liberation Sans, sans-serif" font-size="9" fill="#222" stroke="#222" stroke-width="0.3">
<text transform="matrix(0.72,0.33,0,1,27.5,454.6)" fill="#333" stroke="#333" stroke-width="0.15">Back</text>
<text transform="matrix(0.92,-0.4,0,1,50,460.8)" font-size="8.6" stroke-width="0.45">Left</text>
<text transform="matrix(-0.84,-0.4,0.82,-0.36,54.6,437.9)" font-size="8" fill="#333" stroke="#333" stroke-width="0.2">Top</text>
</g>

</svg>
</body></html>
